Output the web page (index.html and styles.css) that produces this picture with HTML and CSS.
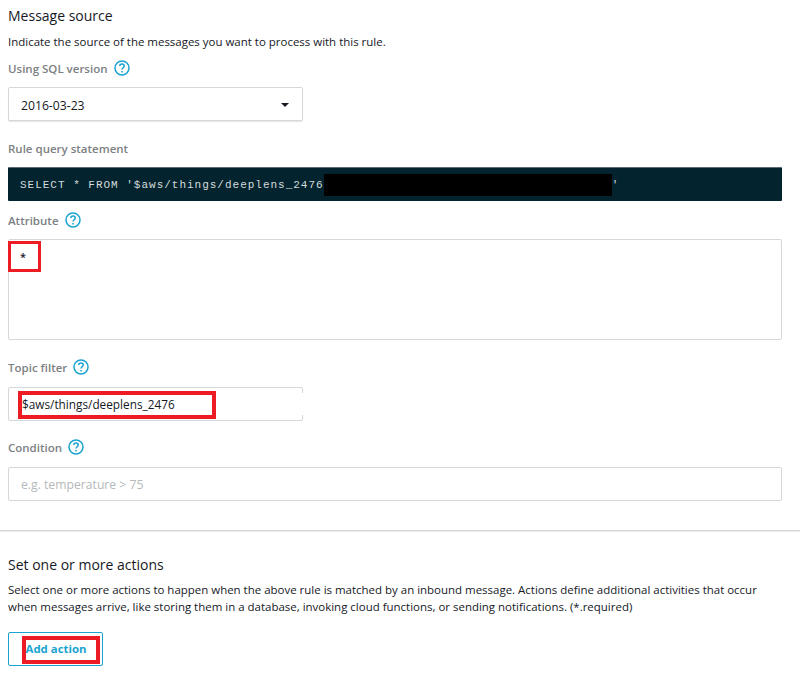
FILE: index.html
```html
<!DOCTYPE html>
<html lang="en">
<head>
<meta charset="utf-8">
<title>Message source</title>
<link rel="stylesheet" href="styles.css">
</head>
<body>
<section class="section">
  <h2 class="heading">Message source</h2>
  <p class="desc">Indicate the source of the messages you want to process with this rule.</p>
  <div class="label-row label-sql">
    <span class="label">Using SQL version</span>
    <svg class="help" viewBox="0 0 16 16"><circle cx="8" cy="8" r="7" /><path d="M5.8 6.1c0-1.3 1-2.1 2.2-2.1s2.2.8 2.2 2c0 1.7-2.2 1.8-2.2 3.6" /><path class="dot" d="M8 11v1.4" /></svg>
  </div>
  <div class="field select narrow">
    <span>2016-03-23</span>
    <span class="caret"></span>
  </div>
  <div class="label-row label-rule">
    <span class="label">Rule query statement</span>
  </div>
  <div class="code">
    <code>SELECT * FROM '$aws/things/deeplens_2476</code><span class="redact"></span><code>'</code>
  </div>
  <div class="label-row label-attr">
    <span class="label">Attribute</span>
    <svg class="help" viewBox="0 0 16 16"><circle cx="8" cy="8" r="7" /><path d="M5.8 6.1c0-1.3 1-2.1 2.2-2.1s2.2.8 2.2 2c0 1.7-2.2 1.8-2.2 3.6" /><path class="dot" d="M8 11v1.4" /></svg>
  </div>
  <div class="field textarea">
    <span class="star">*</span>
    <span class="mark mark-star"></span>
  </div>
  <div class="label-row label-topic">
    <span class="label">Topic filter</span>
    <svg class="help" viewBox="0 0 16 16"><circle cx="8" cy="8" r="7" /><path d="M5.8 6.1c0-1.3 1-2.1 2.2-2.1s2.2.8 2.2 2c0 1.7-2.2 1.8-2.2 3.6" /><path class="dot" d="M8 11v1.4" /></svg>
  </div>
  <div class="field topic narrow">
    <span class="topic-text">$aws/things/deeplens_2476</span>
    <span class="mark mark-topic"></span>
    <span class="border-gap"></span>
  </div>
  <div class="label-row label-cond">
    <span class="label">Condition</span>
    <svg class="help" viewBox="0 0 16 16"><circle cx="8" cy="8" r="7" /><path d="M5.8 6.1c0-1.3 1-2.1 2.2-2.1s2.2.8 2.2 2c0 1.7-2.2 1.8-2.2 3.6" /><path class="dot" d="M8 11v1.4" /></svg>
  </div>
  <div class="field placeholder">e.g. temperature &gt; 75</div>
</section>
<hr class="rule">
<section class="section">
  <h2 class="heading">Set one or more actions</h2>
  <p class="desc desc-actions">Select one or more actions to happen when the above rule is matched by an inbound message. Actions define additional activities that occur<br>when messages arrive, like storing them in a database, invoking cloud functions, or sending notifications. (*.required)</p>
  <div class="button">
    <span>Add action</span>
    <span class="mark mark-button"></span>
  </div>
</section>
</body>
</html>
```
FILE: styles.css
```css
* { box-sizing: border-box; }
html, body { margin: 0; padding: 0; background: #fff; }
body {
  width: 800px;
  height: 675px;
  overflow: hidden;
  font-family: "Open Sans", "Liberation Sans", sans-serif;
  color: #16191f;
  font-size: 12px;
}
.section { padding: 0 18px 0 8px; }
.section:first-child { padding-top: 6px; }
.heading {
  margin: 0;
  font-size: 14px;
  line-height: 20px;
  font-weight: 400;
  color: #16191f;
}
.desc {
  margin: 7px 0 0;
  font-size: 11.47px;
  line-height: 17px;
  color: #16191f;
}
.label-row {
  display: flex;
  align-items: center;
  gap: 6px;
  height: 18px;
}
.label { font-size: 11.5px; font-weight: 600; color: #7c7f83; }
.label-sql { margin-top: 9px; }
.label-rule { margin-top: 18px; }
.label-attr { margin-top: 10px; }
.label-topic { margin-top: 18px; }
.label-cond { margin-top: 17px; }
.help { width: 16px; height: 16px; flex: none; fill: none; stroke: #1ba3cf; stroke-width: 1.5; }
.help .dot { stroke-width: 1.5; }
.field {
  position: relative;
  border: 1px solid #d5d8d8;
  border-radius: 2px;
  background: #fff;
  height: 34px;
  margin-top: 10px;
  padding: 0 12px;
  display: flex;
  align-items: center;
  font-size: 12.2px;
  color: #16191f;
}
.narrow { width: 295px; }
.select { justify-content: space-between; padding: 2px 13px 0 12px; box-shadow: 0 1px 1px #e4e6e6; }
.caret {
  width: 0;
  height: 0;
  border-left: 4px solid transparent;
  border-right: 4px solid transparent;
  border-top: 4px solid #16191f;
}
.code {
  display: flex;
  align-items: center;
  height: 34px;
  margin-top: 10px;
  padding-left: 12px;
  background: #03242f;
  border-top: 1px solid #5b6b75;
  border-radius: 1px;
}
.code code {
  font-family: "Liberation Mono", monospace;
  font-size: 11px;
  letter-spacing: 0.99px;
  color: #d5dbdb;
  white-space: pre;
}
.redact { width: 288px; height: 22px; background: #000; margin-right: 0; }
.textarea { height: 101px; margin-top: 10px; align-items: flex-start; padding-top: 10px; padding-left: 11px; }
.star { font-size: 11px; line-height: 14px; font-weight: 600; }
.topic { height: 34px; margin-top: 11px; }
.topic-text { font-size: 11.8px; color: #16191f; position: relative; left: 1px; }
.border-gap {
  position: absolute;
  right: -1px;
  top: 5px;
  bottom: 5px;
  width: 1px;
  background: #fff;
}
.placeholder { color: #b5b9bb; margin-top: 11px; }
.mark { position: absolute; border-style: solid; border-color: #ed1c24; background: transparent; }
.mark-star { left: -1px; top: 1px; width: 33px; height: 31px; border-width: 3px; }
.mark-topic { left: 9px; top: 3px; width: 198px; height: 28px; border-width: 4px; }
.mark-button { left: 13px; top: 3px; width: 78px; height: 28px; border-width: 4px; }
.rule {
  margin: 29px 0 0;
  border: 0;
  border-top: 1px solid #d5d8d8;
  border-bottom: 1px solid #ececec;
  height: 2px;
}
.rule + .section { padding-top: 23px; }
.desc-actions { margin-top: 6px; }
.button {
  position: relative;
  display: flex;
  align-items: center;
  justify-content: center;
  width: 95px;
  height: 34px;
  margin-top: 17px;
  border: 1px solid #1ba3cf;
  border-radius: 2px;
  font-size: 11.4px;
  font-weight: 700;
  color: #1ba3cf;
  padding: 0 0 2px 1px;
}
```
